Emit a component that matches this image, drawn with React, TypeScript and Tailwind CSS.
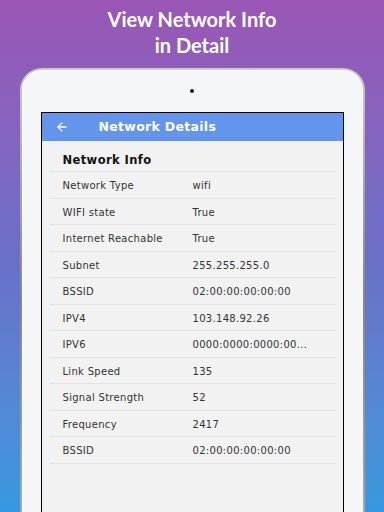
import { ArrowLeft } from "lucide-react";

const ROWS = [
  ["Network Type", "wifi"],
  ["WIFI state", "True"],
  ["Internet Reachable", "True"],
  ["Subnet", "255.255.255.0"],
  ["BSSID", "02:00:00:00:00:00"],
  ["IPV4", "103.148.92.26"],
  ["IPV6", "0000:0000:0000:00..."],
  ["Link Speed", "135"],
  ["Signal Strength", "52"],
  ["Frequency", "2417"],
  ["BSSID", "02:00:00:00:00:00"],
];

export default function App() {
  return (
    <div className="w-[384px] h-[512px] overflow-hidden flex flex-col items-center bg-gradient-to-b from-[#9a56b5] via-[#6a6fc8] to-[#3599df]">
      {/* Title */}
      <div
        className="pt-[6px] text-white text-[20px] leading-[26px] font-bold text-center"
        style={{ fontFamily: "Lato, 'Open Sans', sans-serif" }}
      >
        <div>View Network Info</div>
        <div>in Detail</div>
      </div>

      {/* Tablet */}
      <div className="mt-[10px] w-[345px] shrink-0 rounded-t-[22px] p-[2px] pb-0 bg-gradient-to-b from-[#c9c9ce] via-[#85858b] to-[#a9aaaf]">
        <div className="rounded-t-[20px] bg-[#f5f6f8] flex flex-col items-center pt-[19px] h-[460px] shadow-[inset_1px_1px_0_#ffffff]">
          <div className="w-[4px] h-[4px] rounded-full bg-[#1b1d45]" />
          <div className="mt-[19px] w-[303px] flex-1 border-[1.5px] border-b-0 border-black bg-[#f2f2f2] flex flex-col" style={{ fontFamily: "'DejaVu Sans', Verdana, sans-serif" }}>
            {/* App bar */}
            <div className="h-[28px] shrink-0 bg-[#6495ed] flex items-center text-white">
              <ArrowLeft size={14} strokeWidth={2.2} className="ml-[13px]" />
              <span className="ml-[30px] text-[12.5px] font-bold tracking-[0.3px] pt-[1px]">Network Details</span>
            </div>

            {/* Content */}
            <div className="px-[7px] pt-[6px]">
              <div className="h-[25px] border-b border-[#e3e3e5] flex items-center pl-[14px] pt-[4px] text-[11.5px] font-bold tracking-[0.4px] text-[#111]">
                Network Info
              </div>
              {ROWS.map(([label, value], i) => (
                <div key={i} className="h-[26.5px] border-b border-[#e3e3e5] flex items-center pt-[2px] text-[10px] tracking-[0.3px] text-[#333]">
                  <span className="pl-[14px] w-[144px]">{label}</span>
                  <span>{value}</span>
                </div>
              ))}
            </div>
          </div>
        </div>
      </div>
    </div>
  );
}
